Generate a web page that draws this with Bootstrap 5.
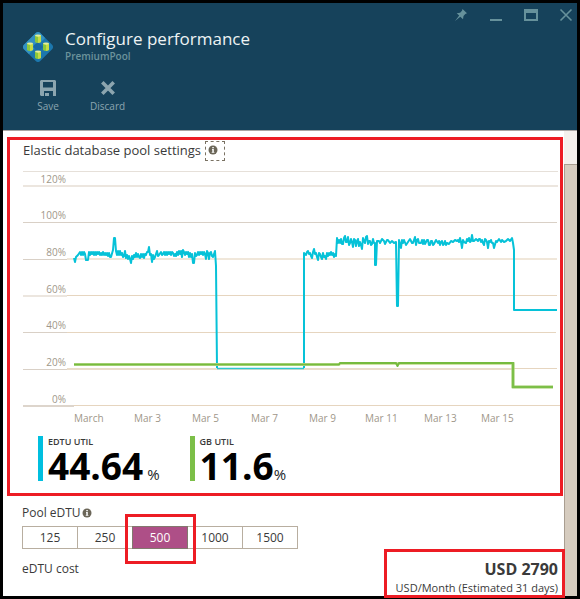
<!DOCTYPE html>
<html lang="en">
<head>
<meta charset="utf-8">
<meta name="viewport" content="width=device-width, initial-scale=1">
<title>Configure performance</title>
<link href="https://cdn.jsdelivr.net/npm/bootstrap@5.3.0/dist/css/bootstrap.min.css" rel="stylesheet">
<style>
  :root { --hot: #ed1c24; --line: #b8aea0; --ink: #3a3a3a; }
  body { font-family: "Open Sans", "Noto Sans", sans-serif; font-size: 12px; line-height: 16px; color: var(--ink); background: #fff; }
  .blade { border: 3px solid #000; }
  .blade-head { background: #16425b; border-bottom: 1px solid #a9a5a3; color: #7499a3; }
  .blade-head svg { display: block; }
  .plain-btn { background: none; border: 0; padding: 0; color: inherit; }
  .window-tools { gap: 21px; padding: 3px 4px 0 0; height: 21px; }
  .blade-title { font-size: 17px; line-height: 22px; color: #eef3f4; }
  .identity { gap: 12px; padding: 0 20px; }
  .blade-sub { font-size: 10px; line-height: 12px; font-weight: 600; color: #6c939c; }
  .commands { gap: 29px; padding: 18px 32px; font-size: 10px; line-height: 12px; color: #8ca5af; }
  .commands .plain-btn { min-width: 26px; }
  .hot-frame { border: 3px solid var(--hot); }
  .chart-panel { margin: 6px 1px 0 4px; padding-bottom: 12px; }
  .panel-title { gap: 4px; padding: 1px 13px 0; }
  .panel-heading { font-size: 13px; line-height: 18px; }
  .info-btn { width: 20px; height: 20px; border: 1px dashed #7a7263; padding: 0 2px 2px; }
  .chart { display: block; width: 100%; height: auto; font-size: 10px; }
  .chart text { fill: #a0978a; }
  .stats { gap: 30px; padding: 4px 28px 0; }
  .stat { border-left: 5px solid; height: 45px; padding-left: 5px; }
  .stat-edtu { border-color: #00bfdf; }
  .stat-gb { border-color: #7cbf48; }
  .stat-name { font-size: 9px; line-height: 11px; font-weight: 600; }
  .stat-value { font-size: 37px; line-height: 38px; font-weight: 700; color: #000; }
  .stat-unit { font-size: 15px; }
  .settings { padding: 9px 3px 0 19px; }
  .pool-title { gap: 1px; }
  .edtu-picker { margin-top: 5px; width: 276px; }
  .edtu-picker .btn { --bs-btn-padding-x: 0; --bs-btn-padding-y: 3px; --bs-btn-font-size: 12px; --bs-btn-border-radius: 0;
    --bs-btn-border-color: var(--line); --bs-btn-color: var(--ink); --bs-btn-active-bg: #ae4f87; --bs-btn-active-color: #fff;
    --bs-btn-active-border-color: #82786e; line-height: 15px; flex: 1 1 0; }
  .pick-mark { inset: -13px -9px -16px -8px; pointer-events: none; z-index: 3; }
  .cost-label { padding-top: 12px; }
  .cost-frame { margin: 0 -4px -2px 0; padding: 7px 4px 0 0; position: relative; width: 181px; height: 49px; }
  .cost-sum { font-size: 16px; line-height: 20px; font-weight: 700; }
  .cost-note { font-size: 11px; line-height: 17px; white-space: nowrap; }
  .scroll-track { width: 13px; background: #f4f0ec; padding-top: 33px; }
  .scroll-thumb { background: #d6ccbf; border: solid #a99e91; border-width: 1px 0 0 1px; }
</style>
</head>
<body>
<div class="blade min-vh-100 d-flex flex-column">
  <header class="blade-head">
    <div class="window-tools d-flex justify-content-end">
      <button class="plain-btn" aria-label="Pin"><svg width="14" height="14" viewBox="0 0 14 14" fill="#66919b"><path d="M8.500 1 13 5.300 11.300 6.100 9.500 7.900 9 11.200 6.300 8.700 1 13 5.200 7.600 2.700 5.200 6.100 4.700 8 2.800Z"/></svg></button>
      <button class="plain-btn" aria-label="Minimize"><svg width="14" height="14" viewBox="0 0 14 14"><path fill="#66919b" d="M1 11h12v2H1z"/></svg></button>
      <button class="plain-btn" aria-label="Maximize"><svg width="14" height="14" viewBox="0 0 14 14"><path fill="#66919b" fill-rule="evenodd" d="M0 1h14v12H0zM2 5v6h10V5z"/></svg></button>
      <button class="plain-btn" aria-label="Close"><svg width="14" height="14" viewBox="0 0 14 14"><path fill="none" stroke="#66919b" stroke-width="1.600" d="m1.500 1.500 11 11m0-11-11 11"/></svg></button>
    </div>
    <div class="identity d-flex align-items-end">
      <svg width="30" height="38" viewBox="0 0 30 38" aria-hidden="true">
        <path fill="#1c77ae" d="M13 8.700q2-1.500 4 0L29.300 21q1.500 2 0 4L17 37.300q-2 1.500-4 0L.700 25q-1.500-2 0-4Z"/>
        <path fill="#3391c1" d="M13 8.700q2-1.500 4 0L22 14 6 30 .7 25q-1.500-2 0-4Z"/>
        <path fill="#1768a4" d="m11 21 4-3 5 5-5 5-5-5Z"/>
        <g id="can"><path fill="#8bc73d" d="M12 11.500h3v7.500q-2 0-3-1z"/><path fill="#c5dc45" d="M15 11.500h3V18q-1 1-3 1z"/><ellipse cx="15" cy="11.600" rx="3" ry="1.100" fill="#e3ed9c"/></g>
        <use href="#can" x="-8" y="8"/><use href="#can" x="8" y="8"/><use href="#can" y="16"/>
      </svg>
      <div>
        <h1 class="blade-title fw-normal mb-0">Configure performance</h1>
        <div class="blade-sub">PremiumPool</div>
      </div>
    </div>
    <div class="commands d-flex">
      <button class="plain-btn d-flex flex-column align-items-center gap-1">
        <svg width="16" height="16" viewBox="0 0 16 16" fill="#8ca5af"><path fill-rule="evenodd" d="M1 0h14l1 1v15h-3v-5H4v5H1l-1-1V1zM3 2v5.500h10V2z"/><path d="M5 13h4v3H5z"/></svg>
        <span>Save</span>
      </button>
      <button class="plain-btn d-flex flex-column align-items-center gap-1">
        <svg width="16" height="16" viewBox="0 0 16 16"><path fill="none" stroke="#8ca5af" stroke-width="3.600" d="m2.300 2.300 11.400 11.400m0-11.400L2.300 13.700"/></svg>
        <span>Discard</span>
      </button>
    </div>
  </header>

  <div class="d-flex flex-grow-1">
    <main class="flex-grow-1">
      <section class="chart-panel hot-frame">
        <div class="panel-title d-flex">
          <h2 class="panel-heading fw-normal mb-0">Elastic database pool settings</h2>
          <button class="plain-btn info-btn" aria-label="About pool settings"><svg width="10" height="10" viewBox="0 0 10 10" class="d-block"><circle cx="5" cy="5" r="4.500" fill="#6b6658"/><path fill="#fff" d="M4.300 2h1.500v1.300H4.300zM4 4h1.800v3h.6v.8H3.700V7h.6V4.800H4z"/></svg></button>
        </div>
        <svg class="chart" viewBox="10 161 550 271" role="img" aria-label="Pool utilization in percent, March">
          <g fill="none">
            <path stroke="#e6e0d9" d="M23 171.500H558"/>
            <path stroke="#ece6df" stroke-width="2" d="M23 186H558"/>
            <path stroke="#d9d0c6" d="M23 222.500H557M23 332.500H67M23 369.500H67"/>
            <path stroke="#d9d0c6" d="M23 259.500H67"/>
            <path stroke="#f0e7da" stroke-width="2" d="M67 259H557"/>
            <path stroke="#ece6df" stroke-width="2" d="M23 296H67"/>
            <path stroke="#e6d5bf" d="M67 295.500H557M67 332.500H556M74 405.500H560"/>
            <path stroke="#eaddcb" stroke-width="2" d="M67 369H512"/>
            <path stroke="#e6d5bf" d="M512 368.500H557"/>
            <path stroke="#ddd5cc" stroke-width="2" d="M23 406H74"/>
          </g>
          <g text-anchor="end">
            <text x="66" y="183">120%</text><text x="66" y="219">100%</text><text x="66" y="256">80%</text><text x="66" y="293">60%</text>
            <text x="66" y="329">40%</text><text x="66" y="366">20%</text><text x="66" y="403">0%</text>
          </g>
          <g>
            <text x="74" y="422">March</text><text x="134" y="422">Mar 3</text><text x="192" y="422">Mar 5</text><text x="251" y="422">Mar 7</text>
            <text x="309" y="422">Mar 9</text><text x="365" y="422">Mar 11</text><text x="424" y="422">Mar 13</text><text x="481" y="422">Mar 15</text>
          </g>
          <g fill="none" stroke-linejoin="round">
            <path stroke="#2fc7cf" stroke-width="1.500" d="M217 368.500H304"/>
            <path stroke="#06c2d8" stroke-width="2" d="M74 258 75 262 76 257 78 255 80 252 81 255 82 252 83 255 84 252 85 254 86 260 88 260 89 252 90 255 91 252 92 254 93 252 94 255 95 252 96 255 97 252 98 254 99 252 100 255 101 253 102 255 103 252 104 255 105 253 106 255 107 253 108 256 109 253 110 257 111 257 113 250 114 238 115 238 116 251 117 255 118 251 119 255 120 251 121 255 122 253 123 257 124 256 125 251 126 258 127 255 128 259 129 256 130 259 131 263 132 256 133 259 134 255 135 257 136 253 137 257 138 254 139 257 140 258 141 254 142 257 143 254 144 258 145 254 146 255 147 252 148 252 149 247 150 255 151 254 152 262 153 255 154 259 155 257 157 251 158 256 159 255 161 252 162 255 163 254 164 252 165 255 166 252 167 255 168 252 169 254 170 252 171 255 172 252 173 253 174 256 175 254 176 256 177 252 178 255 179 251 180 254 181 251 182 257 183 250 184 252 185 255 186 252 187 254 188 252 189 257 190 253 191 257 192 254 193 263 194 263 195 253 196 256 197 255 198 252 199 255 200 252 201 254 202 252 203 255 204 252 205 254 206 259 207 251 208 253 209 259 210 253 211 252 212 256 213 257 215 251 216 266 217 368"/>
            <path stroke="#06c2d8" stroke-width="2" d="M304 368V253L306 255 307 252 308 251 309 254 310 253 311 256 312 258 313 252 314 249 315 254 316 253 317 257 318 260 319 253 320 254 321 257 322 259 323 253 324 257 325 256 326 259 327 253 328 256 329 253 330 255 331 252 332 255 333 253 334 257 335 254 336 256 337 238 338 243 339 240 340 243 341 239 342 244 343 244 344 238 345 236 346 242 347 242 348 237 349 245 350 243 351 239 352 242 353 247 354 239 355 240 356 246 357 241 358 239 359 246 360 242 361 245 362 249 363 238 364 241 365 243 366 237 367 236 368 244 369 241 370 241 371 245 372 244 373 239 374 243 375 243 375 265 376 265 377 241 379 241 380 243 382 239 384 241 385 244 387 240 388 240 390 243 392 241 394 243 396 242 397 306 398 306 399 240 401 248 402 240 403 243 404 240 406 245 408 242 410 239 412 243 413 243 414 240 415 237 416 245 417 240 418 239 419 243 421 243 422 240 423 244 424 240 425 244 426 242 427 240 428 240 429 245 430 245 431 241 432 241 433 245 434 244 436 240 438 243 439 241 440 245 441 242 442 241 443 245 444 244 445 241 446 245 447 243 449 244 451 241 453 242 455 240 457 241 458 240 459 242 460 238 461 242 462 248 463 240 464 242 466 243 467 239 468 241 469 238 470 242 471 241 472 235 473 241 474 241 476 239 478 241 479 239 480 239 481 242 482 240 483 243 484 245 485 239 486 240 487 242 488 248 489 241 490 242 491 240 492 243 493 243 494 248 496 241 497 242 499 239 501 242 502 240 504 242 506 241 508 239 510 241 512 238 513 243 514 250V310H557"/>
            <path stroke="#cfe3a4" stroke-width="3" d="M74 364.500H339L340 363.500H513V387H553"/>
            <path stroke="#76bb3f" stroke-width="2" d="M74 364.500H339L340 363H396L397.500 366 399 363H513"/>
            <path stroke="#7cbf48" stroke-width="2.600" stroke-linejoin="miter" d="M513 362V387H553"/>
          </g>
        </svg>
        <div class="stats d-flex">
          <div class="stat stat-edtu">
            <div class="stat-name">EDTU UTIL</div>
            <div class="stat-value">44.64<span class="stat-unit fw-normal text-body ms-1">%</span></div>
          </div>
          <div class="stat stat-gb">
            <div class="stat-name">GB UTIL</div>
            <div class="stat-value">11.6<span class="stat-unit fw-normal text-body">%</span></div>
          </div>
        </div>
      </section>

      <section class="settings">
        <div class="pool-title d-flex align-items-center">
          <span id="pool-label">Pool eDTU</span>
          <button class="plain-btn" aria-label="About pool eDTU"><svg width="10" height="10" viewBox="0 0 10 10" class="d-block"><circle cx="5" cy="5" r="4.500" fill="#6b6658"/><path fill="#fff" d="M4.300 2h1.500v1.300H4.300zM4 4h1.800v3h.6v.8H3.700V7h.6V4.800H4z"/></svg></button>
        </div>
        <div class="edtu-picker btn-group d-flex" role="group" aria-labelledby="pool-label">
          <input type="radio" class="btn-check" name="edtu" id="e125"><label class="btn" for="e125">125</label>
          <input type="radio" class="btn-check" name="edtu" id="e250"><label class="btn" for="e250">250</label>
          <input type="radio" class="btn-check" name="edtu" id="e500" checked><label class="btn" for="e500">500<span class="pick-mark hot-frame position-absolute"></span></label>
          <input type="radio" class="btn-check" name="edtu" id="e1000"><label class="btn" for="e1000">1000</label>
          <input type="radio" class="btn-check" name="edtu" id="e1500"><label class="btn" for="e1500">1500</label>
        </div>
        <div class="d-flex justify-content-between">
          <div class="cost-label">eDTU cost</div>
          <div class="cost-frame hot-frame text-end">
            <div class="cost-sum">USD 2790</div>
            <div class="cost-note">USD/Month (Estimated 31 days)</div>
          </div>
        </div>
      </section>
    </main>
    <div class="scroll-track d-flex"><div class="scroll-thumb flex-grow-1"></div></div>
  </div>
</div>
<script src="https://cdn.jsdelivr.net/npm/bootstrap@5.3.0/dist/js/bootstrap.bundle.min.js"></script>
</body>
</html>
